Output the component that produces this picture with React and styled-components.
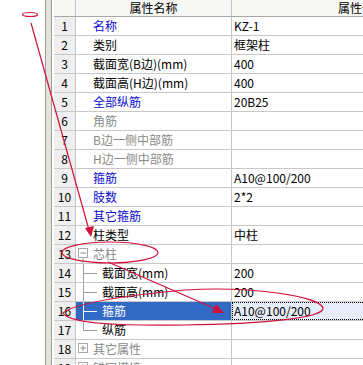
import React from 'react'
import styled, { createGlobalStyle } from 'styled-components'

const rows = [
  { n: 1, name: '名称', value: 'KZ-1', tone: 'blue' },
  { n: 2, name: '类别', value: '框架柱' },
  { n: 3, name: '截面宽(B边)(mm)', value: '400' },
  { n: 4, name: '截面高(H边)(mm)', value: '400' },
  { n: 5, name: '全部纵筋', value: '20B25', tone: 'blue' },
  { n: 6, name: '角筋', value: '', tone: 'gray' },
  { n: 7, name: 'B边一侧中部筋', value: '', tone: 'gray' },
  { n: 8, name: 'H边一侧中部筋', value: '', tone: 'gray' },
  { n: 9, name: '箍筋', value: 'A10@100/200', tone: 'blue' },
  { n: 10, name: '肢数', value: '2*2', tone: 'blue' },
  { n: 11, name: '其它箍筋', value: '', tone: 'blue' },
  { n: 12, name: '柱类型', value: '中柱' },
  { n: 13, name: '芯柱', value: '', tone: 'gray', kind: 'group', open: true },
  { n: 14, name: '截面宽(mm)', value: '200', kind: 'child' },
  { n: 15, name: '截面高(mm)', value: '200', kind: 'child' },
  { n: 16, name: '箍筋', value: 'A10@100/200', kind: 'child', selected: true },
  { n: 17, name: '纵筋', value: '', kind: 'child', last: true },
  { n: 18, name: '其它属性', value: '', tone: 'gray', kind: 'group' },
  { n: 19, name: '锚固搭接', value: '', tone: 'gray', kind: 'group' }
]

const toneColor = {
  blue: '#0a0ad0',
  gray: '#8a8a8a',
  plain: '#000'
}

function Gutter({ row }) {
  const line = row.selected ? '#ffffff' : '#a0a0a0'
  if (row.kind === 'group') {
    return (
      <GutterBox $w={17}>
        <svg width="17" height="18">
          <rect x="2.5" y="3.5" width="9" height="9" fill="#fff" stroke="#a8a8a8" />
          <line x1="4.5" y1="8" x2="10" y2="8" stroke="#8a8a8a" />
          {!row.open && <line x1="7" y1="5.5" x2="7" y2="11" stroke="#8a8a8a" />}
          {row.open && <line x1="7" y1="13" x2="7" y2="18" stroke="#a0a0a0" />}
        </svg>
      </GutterBox>
    )
  }
  if (row.kind === 'child') {
    return (
      <GutterBox $w={26}>
        <svg width="26" height="18">
          <line x1="7.5" y1="0" x2="7.5" y2={row.last ? 9 : 18} stroke={line} />
          <line x1="7" y1="9.5" x2="21" y2="9.5" stroke={line} />
        </svg>
      </GutterBox>
    )
  }
  return <GutterBox $w={17} />
}

function Annotations() {
  return (
    <Overlay width="363" height="365" viewBox="0 0 363 365">
      <g fill="none" stroke="#d0103a" strokeWidth="1.2">
        <ellipse cx="30" cy="14.5" rx="7.5" ry="2" />
        <line x1="31" y1="23" x2="89" y2="230" />
        <ellipse cx="110" cy="252.5" rx="48" ry="10.5" />
        <line x1="108" y1="262" x2="216" y2="309" />
        <path d="M63 313 C 75 303, 120 296, 185 290 C 250 286, 320 296, 323 308 C 325 318, 260 324, 185 325 C 120 326, 70 324, 63 313 Z" />
      </g>
      <g fill="#d0103a">
        <polygon points="91,237 85,228 94,226" />
        <polygon points="224,313 212,313 216,304" />
      </g>
    </Overlay>
  )
}

export default function App() {
  return (
    <>
      <GlobalStyle />
      <Page>
        <LeftPane />
        <Splitter />
        <Grid>
          <HeaderRow>
            <HeaderNum />
            <HeaderCell>属性名称</HeaderCell>
            <HeaderCell>属性值</HeaderCell>
          </HeaderRow>
          {rows.map((row) => (
            <Row key={row.n}>
              <NumCell>{row.n}</NumCell>
              <NameCell $selected={row.selected}>
                <Gutter row={row} />
                <NameText $color={row.selected ? '#fff' : toneColor[row.tone || 'plain']}>
                  {row.name}
                </NameText>
              </NameCell>
              <ValueCell $selected={row.selected}>{row.value}</ValueCell>
            </Row>
          ))}
        </Grid>
        <Annotations />
      </Page>
    </>
  )
}

const GlobalStyle = createGlobalStyle`
  html, body {
    margin: 0;
    padding: 0;
    background: #fff;
    overflow: hidden;
  }
  body {
    font-family: "Noto Sans CJK SC", "Noto Sans", sans-serif;
    font-size: 12px;
  }
`
const Page = styled.div`
  position: relative;
  display: flex;
  width: 363px;
  height: 365px;
  overflow: hidden;
`
const LeftPane = styled.div`
  width: 45px;
  flex: none;
  background: #fff;
`
const Splitter = styled.div`
  width: 5px;
  flex: none;
  background: #e4e2da;
  border-left: 1px solid #9c9c9c;
  border-right: 1px solid #9c9c9c;
  margin-right: 2px;
`
const Grid = styled.div`
  flex: none;
  width: 427px;
`
const HeaderRow = styled.div`
  display: grid;
  grid-template-columns: 22px 156px 249px;
  height: 16px;
  border-bottom: 1px solid #a8a8a8;
  background: #f7f7f5;
`
const HeaderNum = styled.div`
  border-right: 1px solid #c4c4c4;
`
const HeaderCell = styled.div`
  border-right: 1px solid #c4c4c4;
  text-align: center;
  line-height: 16px;
  color: #000;
`
const Row = styled.div`
  display: grid;
  grid-template-columns: 22px 156px 249px;
  height: 18px;
  border-bottom: 1px solid #c8c8c8;
`
const NumCell = styled.div`
  background: #efefef;
  border-right: 1px solid #c4c4c4;
  text-align: center;
  line-height: 18px;
  color: #000;
`
const NameCell = styled.div`
  display: flex;
  align-items: center;
  overflow: hidden;
  white-space: nowrap;
  background: ${(p) => (p.$selected ? '#316ac5' : '#fff')};
  border-right: 1px solid #c4c4c4;
`
const GutterBox = styled.div`
  flex: none;
  width: ${(p) => p.$w}px;
  height: 18px;
  svg {
    display: block;
  }
`
const NameText = styled.span`
  color: ${(p) => p.$color};
  line-height: 18px;
`
const ValueCell = styled.div`
  box-sizing: border-box;
  padding-left: 2px;
  line-height: ${(p) => (p.$selected ? '16px' : '18px')};
  white-space: nowrap;
  color: #000;
  background: ${(p) => (p.$selected ? '#e6edf8' : '#fff')};
  border: ${(p) => (p.$selected ? '1px dotted #000' : 'none')};
  padding-left: ${(p) => (p.$selected ? '1px' : '2px')};
`
const Overlay = styled.svg`
  position: absolute;
  top: 0;
  left: 0;
  pointer-events: none;
`
